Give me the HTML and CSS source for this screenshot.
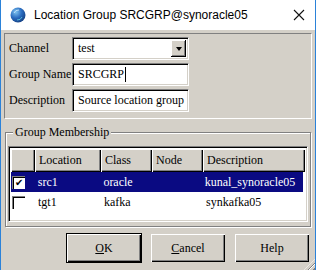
FILE: index.html
```html
<!DOCTYPE html>
<html>
<head>
    <meta charset="UTF-8">
    <title>Location Group</title>
    <link rel="stylesheet" href="styles.css">
</head>
<body>
    <div class="window">
        <!-- title bar -->
        <div class="title-bar">
            <svg class="app-icon" width="16" height="16" viewBox="0 0 16 16">
                <defs>
                    <radialGradient id="orb" cx="0.35" cy="0.3" r="0.8">
                        <stop offset="0" stop-color="#7fc4f0"/>
                        <stop offset="0.5" stop-color="#2a6cc0"/>
                        <stop offset="1" stop-color="#123a7a"/>
                    </radialGradient>
                </defs>
                <circle cx="8" cy="8" r="7.5" fill="url(#orb)"/>
                <path d="M4 6 A5 5 0 0 1 9 3" stroke="#cfeaff" stroke-width="1" fill="none" opacity="0.8"/>
                <path d="M12 10 A5 5 0 0 1 7 13" stroke="#5fd0e8" stroke-width="1" fill="none" opacity="0.8"/>
            </svg>
            <span class="title-text">Location Group SRCGRP@synoracle05</span>
            <svg class="close-icon" width="12" height="12" viewBox="0 0 12 12">
                <path d="M1 1 L11 11 M11 1 L1 11" stroke="#111" stroke-width="1.1"/>
            </svg>
        </div>

        <div class="content">
            <!-- channel / name / description -->
            <div class="panel">
                <div class="field-label">Channel</div>
                <div class="combo sunken">
                    <span class="combo-text">test</span>
                    <span class="combo-button"><span class="arrow"></span></span>
                </div>
                <div class="field-label">Group Name</div>
                <div class="entry sunken">SRCGRP<span class="caret"></span></div>
                <div class="field-label">Description</div>
                <div class="entry sunken">Source location group</div>
            </div>

            <!-- members table -->
            <div class="group-box">
                <div class="group-title">Group Membership</div>
                <div class="table sunken">
                    <div class="row header">
                        <div class="cell c-check"></div>
                        <div class="cell c-loc">Location</div>
                        <div class="cell c-class">Class</div>
                        <div class="cell c-node">Node</div>
                        <div class="cell c-desc">Description</div>
                    </div>
                    <div class="row selected">
                        <div class="cell c-check"><span class="checkbox checked">&#10004;</span></div>
                        <div class="cell c-loc">src1</div>
                        <div class="cell c-class">oracle</div>
                        <div class="cell c-node"></div>
                        <div class="cell c-desc">kunal_synoracle05</div>
                    </div>
                    <div class="row">
                        <div class="cell c-check"><span class="checkbox"></span></div>
                        <div class="cell c-loc">tgt1</div>
                        <div class="cell c-class">kafka</div>
                        <div class="cell c-node"></div>
                        <div class="cell c-desc">synkafka05</div>
                    </div>
                </div>
            </div>

            <!-- dialog buttons -->
            <div class="button-row">
                <button class="dlg-button default"><span class="raised"><u>O</u>K</span></button>
                <button class="dlg-button"><span class="raised"><u>C</u>ancel</span></button>
                <button class="dlg-button"><span class="raised">Help</span></button>
            </div>
            <div class="size-grip"></div>
        </div>
    </div>
</body>
</html>
```

FILE: styles.css
```css
body {
    margin: 0;
    font-family: "Liberation Serif", "Times New Roman", serif;
    font-size: 12px;
    color: #000;
}
.window {
    width: 314px;
    height: 270px;
    border-left: 1px solid #2b82d9;
    border-right: 1px solid #2b82d9;
    display: flex;
    flex-direction: column;
}
.title-bar {
    height: 30px;
    background-color: #fff;
    display: flex;
    align-items: center;
}
.app-icon {
    margin-left: 9px;
    margin-right: 8px;
}
.title-text {
    font-family: "Liberation Sans", Arial, sans-serif;
    font-size: 12px;
    color: #000;
    flex: 1;
}
.close-icon {
    margin-right: 10px;
}
.content {
    flex: 1;
    background-color: #d4d0c8;
    padding: 3px 3px 0 3px;
    position: relative;
}
.sunken {
    border-top: 1px solid #808080;
    border-left: 1px solid #808080;
    border-right: 1px solid #fff;
    border-bottom: 1px solid #fff;
    box-shadow: inset 1px 1px 0 #000, inset -1px -1px 0 #d4d0c8;
    background-color: #fff;
}
.panel {
    height: 79px;
    border-top: 1px solid #808080;
    border-left: 1px solid #808080;
    border-right: 1px solid #fff;
    border-bottom: 1px solid #fff;
    padding: 3px 0 2px 3px;
    display: grid;
    grid-template-columns: 64px 117px;
    grid-auto-rows: 23px;
    row-gap: 3px;
    align-items: center;
}
.field-label {
    padding-left: 1px;
}
.combo, .entry {
    height: 23px;
    box-sizing: border-box;
    display: flex;
    align-items: center;
    padding-left: 5px;
}
.combo-text {
    flex: 1;
}
.combo-button {
    width: 15px;
    height: 17px;
    margin-right: 2px;
    background-color: #d4d0c8;
    box-shadow: inset -1px -1px 0 #000, inset 1px 1px 0 #fff, inset -2px -2px 0 #808080;
    display: flex;
    align-items: center;
    justify-content: center;
}
.arrow {
    width: 0;
    height: 0;
    border-left: 3px solid transparent;
    border-right: 3px solid transparent;
    border-top: 4px solid #000;
}
.caret {
    display: inline-block;
    width: 1px;
    height: 15px;
    background-color: #000;
    margin-left: 1px;
}
.group-box {
    margin-top: 13px;
    height: 80px;
    border: 1px solid #808080;
    box-shadow: inset 1px 1px 0 #fff, 1px 1px 0 #fff;
    margin-left: 1px;
    margin-right: 1px;
    padding: 13px 2px 0 2px;
    position: relative;
}
.group-title {
    position: absolute;
    top: -8px;
    left: 7px;
    padding: 0 2px;
    background-color: #d4d0c8;
}
.table {
    height: 76px;
    box-sizing: border-box;
    padding: 2px;
}
.row {
    display: flex;
    height: 20px;
    align-items: center;
}
.row.header {
    height: 23px;
}
.row.selected {
    background-color: #0a0a82;
    color: #fff;
    margin-right: 2px;
}
.cell {
    box-sizing: border-box;
    padding-left: 3px;
    height: 100%;
    display: flex;
    align-items: center;
}
.header .cell {
    background-color: #d4d0c8;
    box-shadow: inset 1px 1px 0 #fff, inset -1px -1px 0 #000, inset -2px -2px 0 #808080;
    padding-left: 4px;
}
.c-check { width: 24px; padding-left: 0; }
.c-loc { width: 66px; }
.c-class { width: 51px; }
.c-node { width: 51px; }
.c-desc { width: 102px; }
.checkbox {
    width: 13px;
    height: 13px;
    box-sizing: border-box;
    background-color: #fff;
    color: #000;
    border-top: 1px solid #808080;
    border-left: 1px solid #808080;
    box-shadow: inset 1px 1px 0 #000;
    font-size: 10px;
    line-height: 12px;
    text-align: center;
    margin-left: 1px;
}
.button-row {
    display: flex;
    justify-content: flex-end;
    gap: 8px;
    margin-top: 6px;
    padding-right: 2px;
}
.dlg-button {
    width: 76px;
    height: 30px;
    padding: 0;
    border: 1px solid #d4d0c8;
    background-color: #d4d0c8;
    font-family: "Liberation Serif", "Times New Roman", serif;
    font-size: 12px;
    color: #000;
}
.dlg-button.default {
    border-color: #000;
}
.raised {
    display: flex;
    align-items: center;
    justify-content: center;
    height: 100%;
    box-shadow: inset 1px 1px 0 #fff, inset -1px -1px 0 #000, inset -2px -2px 0 #808080;
}
.size-grip {
    position: absolute;
    right: 0;
    bottom: 0;
    width: 11px;
    height: 11px;
    background: repeating-linear-gradient(135deg, transparent 0, transparent 2px, #808080 2px, #808080 3px, #fff 3px, #fff 4px);
    clip-path: polygon(100% 0, 100% 100%, 0 100%);
}
```
